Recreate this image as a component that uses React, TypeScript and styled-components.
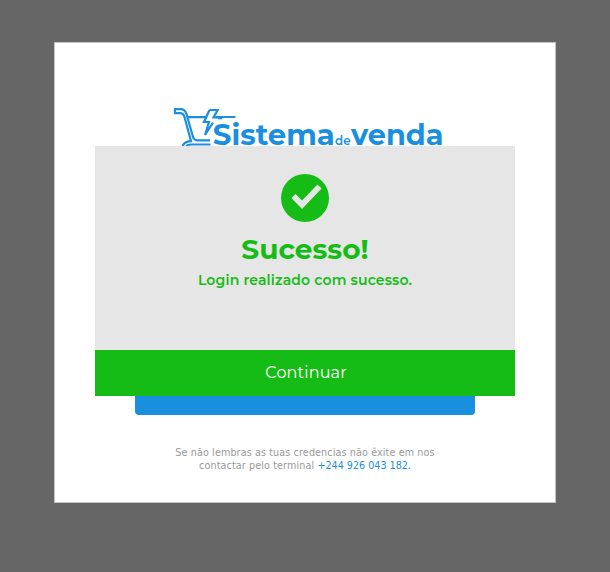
import React from "react";
import styled, { createGlobalStyle } from "styled-components";

const Global = createGlobalStyle`
  * { box-sizing: border-box; }
  body { margin: 0; background: #666; }
`;

const Page = styled.main`
  height: 572px;
  padding: 42px 54px;
  background: #666;
  overflow: hidden;
`;

const Card = styled.section`
  position: relative;
  width: 502px;
  height: 461px;
  padding-top: 62px;
  background: #fff;
  border: 1px solid #c4c4c4;
  display: flex;
  flex-direction: column;
  align-items: center;
`;

const Logo = styled.svg`
  display: block;
  width: 280px;
  height: 46px;
  flex: none;
  overflow: visible;
`;

const LoginButton = styled.button`
  width: 340px;
  height: 45px;
  margin-top: 219px;
  flex: none;
  border: 0;
  border-radius: 4px;
  background: #1a8fdf;
`;

const Help = styled.p`
  margin: 31px 0 0;
  text-align: center;
  font: 9.6px/13px "DejaVu Sans", sans-serif;
  letter-spacing: 0.12px;
  color: #999;
`;

const Phone = styled.span`
  letter-spacing: 0;
  color: #1a8fdf;
`;

const Dialog = styled.div`
  position: absolute;
  left: 40px;
  top: 103px;
  width: 420px;
  height: 250px;
  background: #e6e6e6;
  display: flex;
  flex-direction: column;
  align-items: center;
  font-family: Montserrat, Inter, sans-serif;
  color: #15bc15;
`;

const Badge = styled.svg`
  display: block;
  width: 48px;
  height: 48px;
  margin-top: 28px;
`;

const Title = styled.h1`
  margin: 10px 0 0;
  font-size: 28px;
  line-height: 34px;
  font-weight: 700;
  white-space: nowrap;
`;

const Message = styled.p`
  margin: 5px 0 0;
  font-size: 14px;
  line-height: 18px;
  font-weight: 600;
  letter-spacing: 0.16px;
  white-space: nowrap;
`;

const Continue = styled.button`
  width: 100%;
  height: 46px;
  margin-top: auto;
  padding: 0 0 2px 2px;
  border: 0;
  background: #15bc15;
  color: #fff;
  font: 400 16px Montserrat, Inter, sans-serif;
  letter-spacing: 0.15px;
`;

export default function App() {
  return (
    <Page>
      <Global />
      <Card>
        <Logo viewBox="165 105 280 46" role="img" aria-label="Sistema de venda">
          <g fill="none" stroke="#1a8fdf" strokeWidth="2.2">
            <path d="M182.500 147C183 143.500 186 141.500 191 141.200L184.500 117Q183.500 113.200 180 113.200H175V109.200H180.500Q185 109.200 186.500 114L193 137Q194 140.300 197 140.300H210" />
            <path d="M186 147Q187 144.500 191 144.500H210.500M187.500 117.200H207M217.500 118.200H222M216 117L235.500 117" />
            <path d="M209.500 110H217.700L213.500 117.500H217M209.500 110L204 122H209L205 135L213 122.500" />
          </g>
          <g fill="#1a8fdf" fontFamily="Montserrat, Inter, sans-serif" fontWeight="700">
            <text x="212.800" y="145" fontSize="29" textLength="122" lengthAdjust="spacingAndGlyphs">Sistema</text>
            <text x="335" y="145" fontSize="12.500" fontWeight="600" textLength="15.500" lengthAdjust="spacingAndGlyphs">de</text>
            <text x="351" y="145" fontSize="29" textLength="92.500" lengthAdjust="spacingAndGlyphs">venda</text>
          </g>
        </Logo>
        <LoginButton aria-label="Entrar" />
        <Help>
          Se não lembras as tuas credencias não êxite em nos
          <br />
          contactar pelo terminal <Phone>+244 926 043 182.</Phone>
        </Help>
        <Dialog role="dialog">
          <Badge viewBox="0 0 48 48">
            <circle cx="24" cy="24" r="24" fill="#15bc15" />
            <path d="M12.500 22L21 30.800L38.500 12.500" fill="none" stroke="#e6e6e6" strokeWidth="5.800" />
          </Badge>
          <Title>Sucesso!</Title>
          <Message>Login realizado com sucesso.</Message>
          <Continue>Continuar</Continue>
        </Dialog>
      </Card>
    </Page>
  );
}
